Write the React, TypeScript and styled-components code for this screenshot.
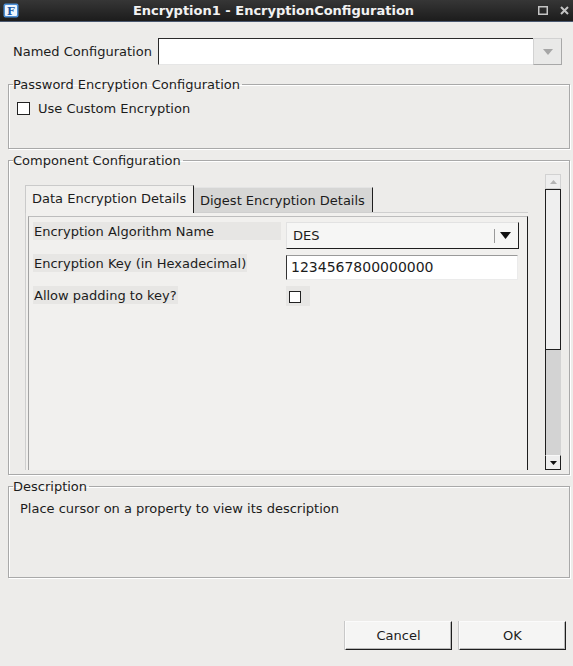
import React from 'react';
import styled, { createGlobalStyle } from 'styled-components';

const Global = createGlobalStyle`
  html, body { margin: 0; padding: 0; background: #edecea; }
  body { font-family: "DejaVu Sans", "Liberation Sans", sans-serif; font-size: 13px; color: #1c1c1c; }
  * { box-sizing: border-box; }
`;

const Window = styled.div`
  width: 573px;
  height: 666px;
  display: flex;
  flex-direction: column;
  background: #edecea;
  overflow: hidden;
`;

const TitleBar = styled.div`
  flex: none;
  height: 22px;
  display: flex;
  align-items: center;
  background: linear-gradient(#363636, #1c1c1c);
  border-bottom: 1px solid #4a5870;
`;

const AppIcon = styled.svg`
  flex: none;
  margin-left: 3px;
  width: 16px;
  height: 15px;
`;

const Title = styled.div`
  flex: 1;
  text-align: center;
  color: #f2f2f2;
  font-weight: bold;
  font-size: 13px;
  line-height: 21px;
  padding-left: 2px;
`;

const Controls = styled.div`
  flex: none;
  display: flex;
  align-items: center;
  gap: 12px;
  margin-right: 4px;
  padding-left: 12px;
`;

const Body = styled.div`
  flex: 1;
  display: flex;
  flex-direction: column;
  padding: 0 3px 0 8px;
`;

const NamedRow = styled.div`
  display: flex;
  align-items: center;
  height: 27px;
  margin-top: 16px;
  padding-left: 5px;
  padding-right: 8px;
`;

const NamedLabel = styled.div`
  width: 145px;
  flex: none;
`;

const Combo = styled.div`
  flex: 1;
  height: 27px;
  display: flex;
`;

const ComboField = styled.div`
  flex: 1;
  background: #ffffff;
  border-top: 1px solid #2a2a2a;
  border-left: 1px solid #2a2a2a;
  border-bottom: 1px solid #e6e6e6;
`;

const ComboButton = styled.div`
  flex: none;
  width: 29px;
  display: flex;
  align-items: center;
  justify-content: center;
  background: #e9e9e8;
  border: 1px solid #d2d2d2;
  border-right-color: #a8a8a8;
  border-bottom-color: #a8a8a8;
`;

const Group = styled.fieldset<{ $mt: number; $pb: number }>`
  margin: ${(p) => p.$mt}px 0 0 0;
  padding: 0 4px ${(p) => p.$pb}px 4px;
  min-width: 0;
  border: 1px solid #a9a9a9;
  box-shadow: inset 1px 1px 0 #ffffff, 1px 1px 0 #ffffff;
`;

const Legend = styled.legend`
  padding: 0 2px 0 0;
  line-height: 15px;
  font-size: 13px;
`;

const CheckRow = styled.label`
  display: flex;
  align-items: center;
  gap: 8px;
  height: 20px;
  margin: 6px 0 0 4px;
`;

const Box = styled.span`
  flex: none;
  width: 13px;
  height: 13px;
  background: #ffffff;
  border: 1px solid #222;
`;

const CompBody = styled.div`
  display: flex;
  height: 296px;
  margin-top: 6px;
`;

const TabbedPane = styled.div`
  width: 503px;
  margin-left: 12px;
  padding-top: 11px;
  display: flex;
  flex-direction: column;
`;

const TabStrip = styled.div`
  display: flex;
  align-items: flex-end;
  height: 27px;
  flex: none;
`;

const Tab = styled.div<{ $active?: boolean }>`
  position: relative;
  z-index: ${(p) => (p.$active ? 1 : 0)};
  height: ${(p) => (p.$active ? 28 : 25)}px;
  margin-bottom: ${(p) => (p.$active ? -1 : 0)}px;
  width: ${(p) => (p.$active ? 169 : 179)}px;
  padding-left: ${(p) => (p.$active ? 6 : 5)}px;
  line-height: ${(p) => (p.$active ? 26 : 25)}px;
  background: ${(p) => (p.$active ? '#f1f0ee' : '#d6d6d5')};
  border-top: 1px solid ${(p) => (p.$active ? '#cacaca' : '#e4e4e4')};
  border-left: 1px solid ${(p) => (p.$active ? '#cacaca' : '#d6d6d5')};
  border-right: 1px solid #1e1e1e;
  white-space: nowrap;
`;

const Panel = styled.div`
  flex: 1;
  display: flex;
  background: #f1f0ee;
  border-left: 1px solid #cfcfcf;
  border-top: 1px solid #cfcfcf;
  padding: 3px 0 0 2px;
`;

const Sheet = styled.div`
  flex: 1;
  border-left: 1px solid #a3a3a3;
  border-top: 1px solid #bdbdbd;
  border-right: 1px solid #1e1e1e;
  padding: 5px 0 0 4px;
  display: grid;
  grid-template-columns: 248px 233px;
  grid-template-rows: 27px 27px 20px;
  column-gap: 5px;
  row-gap: 5px;
  align-content: start;
`;

const PropLabel = styled.div<{ $full?: boolean }>`
  align-self: start;
  justify-self: ${(p) => (p.$full ? 'stretch' : 'start')};
  height: 18px;
  line-height: 19px;
  background: #e7e6e4;
  padding: 0 1px;
  white-space: nowrap;
`;

const Select = styled.div`
  height: 27px;
  display: flex;
  align-items: center;
  background: #f6f6f5;
  border: 1px solid #e2e2e2;
  border-right-color: #1e1e1e;
  border-bottom-color: #1e1e1e;
  padding-left: 6px;
`;

const SelectText = styled.span`
  flex: 1;
`;

const SelectSep = styled.span`
  width: 1px;
  height: 14px;
  background: #9a9a9a;
  margin-right: 5px;
`;

const TextField = styled.div`
  width: 232px;
  height: 25px;
  margin-top: 1px;
  background: #ffffff;
  border: 1px solid #ebebeb;
  border-left-color: #333;
  border-top-color: #9a9a9a;
  padding-left: 4px;
  font-size: 14px;
  line-height: 22px;
`;

const CheckCell = styled.div`
  width: 24px;
  height: 20px;
  background: #e7e6e4;
  display: flex;
  align-items: center;
  padding-left: 3px;
`;

const SmallBox = styled.span`
  width: 12px;
  height: 12px;
  margin-top: 1px;
  background: #fff;
  border: 1px solid #222;
`;

const Scrollbar = styled.div`
  width: 16px;
  margin-left: auto;
  margin-right: 4px;
  display: flex;
  flex-direction: column;
`;

const ScrollBtn = styled.div<{ $enabled?: boolean }>`
  flex: none;
  height: 15px;
  display: flex;
  align-items: center;
  justify-content: center;
  background: #eeeeee;
  border: 1px solid ${(p) => (p.$enabled ? '#f8f8f8' : '#d2d2d2')};
  border-right-color: ${(p) => (p.$enabled ? '#1e1e1e' : '#d2d2d2')};
  border-bottom-color: ${(p) => (p.$enabled ? '#1e1e1e' : '#d2d2d2')};
  border-left-color: ${(p) => (p.$enabled ? '#1e1e1e' : '#d2d2d2')};
`;

const Track = styled.div`
  flex: 1;
  display: flex;
  flex-direction: column;
  background: #d3d3d3;
  border-left: 1px solid #1e1e1e;
`;

const Thumb = styled.div`
  height: 161px;
  background: #efefef;
  border-top: 1px solid #1e1e1e;
  border-right: 1px solid #1e1e1e;
  border-bottom: 1px solid #1e1e1e;
`;

const DescText = styled.div`
  height: 83px;
  padding: 7px 0 0 7px;
  line-height: 15px;
`;

const ButtonRow = styled.div`
  display: flex;
  justify-content: flex-end;
  gap: 7px;
  margin-top: 43px;
  padding-right: 4px;
`;

const Button = styled.button`
  width: 107px;
  height: 29px;
  font-family: "DejaVu Sans", "Liberation Sans", sans-serif;
  font-size: 13px;
  color: #1c1c1c;
  background: #f5f5f4;
  border: 1px solid #fbfbfb;
  border-right-color: #1e1e1e;
  border-bottom-color: #1e1e1e;
  box-shadow: inset -1px -1px 0 #b8b8b8, -1px 0 0 #c8c8c8;
  padding: 0;
`;

export default function App() {
  return (
    <Window>
      <Global />
      <TitleBar>
        <AppIcon viewBox="0 0 16 15">
          <rect x="0.5" y="0.5" width="15" height="14" rx="2" fill="#4d8fd6" />
          <rect x="2" y="2" width="12" height="11" rx="1" fill="#eef5fd" />
          <text x="8" y="11.5" textAnchor="middle" fontFamily="DejaVu Serif, serif" fontWeight="bold" fontSize="11" fill="#1d5aa6">F</text>
        </AppIcon>
        <Title>Encryption1 - EncryptionConfiguration</Title>
        <Controls>
          <svg width="10" height="9" viewBox="0 0 10 9">
            <rect x="0.75" y="0.75" width="8.5" height="7.5" fill="none" stroke="#c4c4c4" strokeWidth="1.5" />
          </svg>
          <svg width="9" height="9" viewBox="0 0 9 9">
            <path d="M1 1 L8 8 M8 1 L1 8" stroke="#c4c4c4" strokeWidth="2" />
          </svg>
        </Controls>
      </TitleBar>
      <Body>
        <NamedRow>
          <NamedLabel>Named Configuration</NamedLabel>
          <Combo>
            <ComboField />
            <ComboButton>
              <svg width="10" height="6" viewBox="0 0 10 6">
                <path d="M0 0 H10 L5 6 Z" fill="#a6a6a6" />
              </svg>
            </ComboButton>
          </Combo>
        </NamedRow>

        <Group $mt={12} $pb={30}>
          <Legend>Password Encryption Configuration</Legend>
          <CheckRow>
            <Box />
            <span>Use Custom Encryption</span>
          </CheckRow>
        </Group>

        <Group $mt={4} $pb={4}>
          <Legend>Component Configuration</Legend>
          <CompBody>
            <TabbedPane>
              <TabStrip>
                <Tab $active>Data Encryption Details</Tab>
                <Tab>Digest Encryption Details</Tab>
              </TabStrip>
              <Panel>
                <Sheet>
                  <PropLabel $full>Encryption Algorithm Name</PropLabel>
                  <Select>
                    <SelectText>DES</SelectText>
                    <SelectSep />
                    <svg width="11" height="7" viewBox="0 0 11 7" style={{ marginRight: 7 }}>
                      <path d="M0 0 H11 L5.5 7 Z" fill="#111" />
                    </svg>
                  </Select>
                  <PropLabel>Encryption Key (in Hexadecimal)</PropLabel>
                  <TextField>1234567800000000</TextField>
                  <PropLabel>Allow padding to key?</PropLabel>
                  <CheckCell>
                    <SmallBox />
                  </CheckCell>
                </Sheet>
              </Panel>
            </TabbedPane>
            <Scrollbar>
              <ScrollBtn>
                <svg width="7" height="4" viewBox="0 0 7 4">
                  <path d="M0 4 H7 L3.5 0 Z" fill="#b4b4b4" />
                </svg>
              </ScrollBtn>
              <Track>
                <Thumb />
              </Track>
              <ScrollBtn $enabled>
                <svg width="7" height="4" viewBox="0 0 7 4">
                  <path d="M0 0 H7 L3.5 4 Z" fill="#111" />
                </svg>
              </ScrollBtn>
            </Scrollbar>
          </CompBody>
        </Group>

        <Group $mt={4} $pb={0}>
          <Legend>Description</Legend>
          <DescText>Place cursor on a property to view its description</DescText>
        </Group>

        <ButtonRow>
          <Button>Cancel</Button>
          <Button>OK</Button>
        </ButtonRow>
      </Body>
    </Window>
  );
}
